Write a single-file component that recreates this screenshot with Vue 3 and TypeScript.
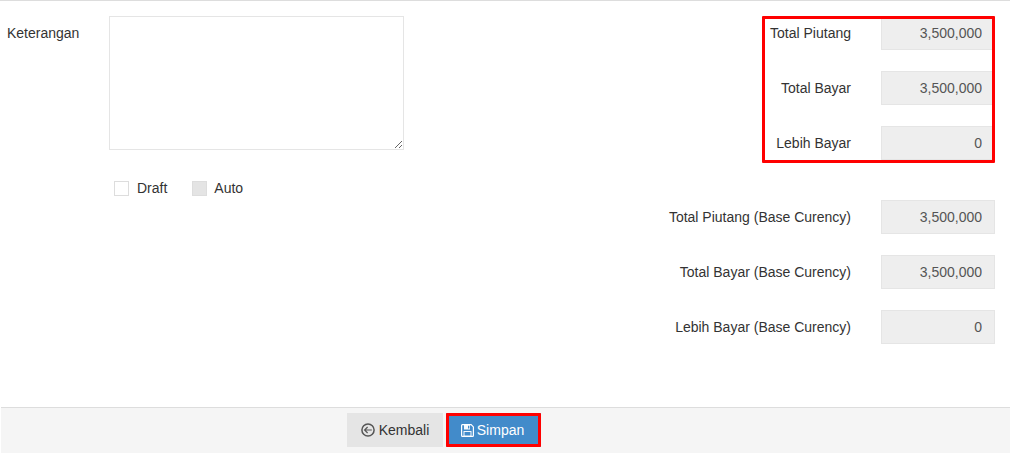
<script setup lang="ts">
interface Row { label: string; value: string }
const localRows: Row[] = [
  { label: 'Total Piutang', value: '3,500,000' },
  { label: 'Total Bayar', value: '3,500,000' },
  { label: 'Lebih Bayar', value: '0' },
]
const baseRows: Row[] = [
  { label: 'Total Piutang (Base Curency)', value: '3,500,000' },
  { label: 'Total Bayar (Base Curency)', value: '3,500,000' },
  { label: 'Lebih Bayar (Base Curency)', value: '0' },
]
</script>

<template>
  <div class="page">
    <main class="form">
      <section class="left">
        <div class="note-row">
          <label class="note-label">Keterangan</label>
          <textarea class="note"></textarea>
        </div>
        <div class="checks">
          <label class="check"><span class="box"></span>Draft</label>
          <label class="check auto"><span class="box disabled"></span>Auto</label>
        </div>
      </section>
      <section class="right">
        <div class="group local">
          <div v-for="r in localRows" :key="r.label" class="row">
            <span class="row-label">{{ r.label }}</span>
            <input class="amount" readonly :value="r.value" />
          </div>
          <div class="mark"></div>
        </div>
        <div class="group base">
          <div v-for="r in baseRows" :key="r.label" class="row">
            <span class="row-label">{{ r.label }}</span>
            <input class="amount" readonly :value="r.value" />
          </div>
        </div>
      </section>
    </main>
    <footer class="actions">
      <button class="btn back" type="button">
        <svg class="ico" viewBox="0 0 14 14" width="14" height="14" fill="none" stroke="#555" stroke-width="1.5">
          <circle cx="7" cy="7" r="6.1" />
          <path d="M10.8 7H3.8M6.6 4 3.6 7l3 3" stroke-width="1.2" />
        </svg>
        Kembali
      </button>
      <button class="btn save" type="button">
        <svg class="ico" viewBox="0 0 13 13" width="13" height="13">
          <path fill="none" stroke="#fff" stroke-width="1.2" d="M1.4.6h8.7l2.3 2.3v8.6c0 .5-.4.9-.9.9H1.4c-.5 0-.8-.4-.8-.9V1.500c0-.5.3-.9.8-.9Z" />
          <path fill="#fff" d="M3 1h6v4.400H3zM2.500 7h8v5h-8z" opacity=".95" />
          <path fill="#428bca" d="M7 1.700h1.300v2.900H7zM3.500 8h6v3.400h-6z" />
        </svg>
        Simpan
      </button>
    </footer>
  </div>
</template>

<style>
html, body { margin: 0; background: #fff; }
</style>

<style scoped>
.page {
  width: 1010px;
  height: 453px;
  display: flex;
  flex-direction: column;
  box-sizing: border-box;
  border-top: 1px solid #ddd;
  font-family: "Liberation Sans", Arial, sans-serif;
  font-size: 14px;
  color: #333;
  overflow: hidden;
}
.form {
  flex: 1;
  display: flex;
  justify-content: space-between;
  padding: 15px 15px 0 7px;
  min-height: 0;
}
.note-row { display: flex; align-items: flex-start; }
.note-label {
  width: 102px;
  line-height: 16px;
  padding-top: 9px;
}
.note {
  display: block;
  width: 295px;
  height: 134px;
  box-sizing: border-box;
  border: 1px solid #e5e5e5;
  padding: 6px 12px;
  margin: 0;
  outline: none;
  background: #fff;
  resize: vertical;
}
.checks {
  display: flex;
  gap: 25px;
  margin: 30px 0 0 107px;
}
.check {
  display: flex;
  align-items: center;
  gap: 8px;
  height: 16px;
  line-height: 16px;
}
.check.auto { gap: 7px; }
.box {
  width: 15px;
  height: 15px;
  box-sizing: border-box;
  border: 1px solid #ddd;
  background: #fff;
}
.box.disabled { background: #e4e4e4; }
.group {
  position: relative;
  display: flex;
  flex-direction: column;
  gap: 21px;
}
.base { margin-top: 40px; }
.row {
  display: flex;
  align-items: center;
  justify-content: flex-end;
  gap: 30px;
  height: 34px;
}
.row-label { color: #333; white-space: nowrap; }
.amount {
  width: 114px;
  height: 34px;
  box-sizing: border-box;
  border: 1px solid #e5e5e5;
  background: #eee;
  padding: 6px 12px;
  margin: 0;
  text-align: right;
  font: inherit;
  color: #555;
  outline: none;
}
.mark {
  position: absolute;
  top: 0;
  right: 0;
  bottom: -3px;
  width: 233px;
  box-sizing: border-box;
  border: 3px solid #f00;
  border-radius: 1px;
  pointer-events: none;
}
.actions {
  height: 46px;
  box-sizing: border-box;
  margin-left: 1px;
  border-top: 1px solid #ddd;
  background: #f5f5f5;
  display: flex;
  align-items: flex-start;
  gap: 3px;
  padding: 5px 0 0 346px;
}
.btn {
  display: flex;
  align-items: center;
  justify-content: center;
  gap: 4px;
  height: 34px;
  margin: 0;
  border: 0;
  font: inherit;
  padding: 0;
}
.back { width: 96px; background: #e5e5e5; color: #333; }
.save {
  width: 95px;
  gap: 3px;
  padding-right: 2px;
  background: #428bca;
  color: #fff;
  box-shadow: inset 0 0 0 3px #f00;
  border-radius: 1px;
}
.ico { flex: none; }
</style>
